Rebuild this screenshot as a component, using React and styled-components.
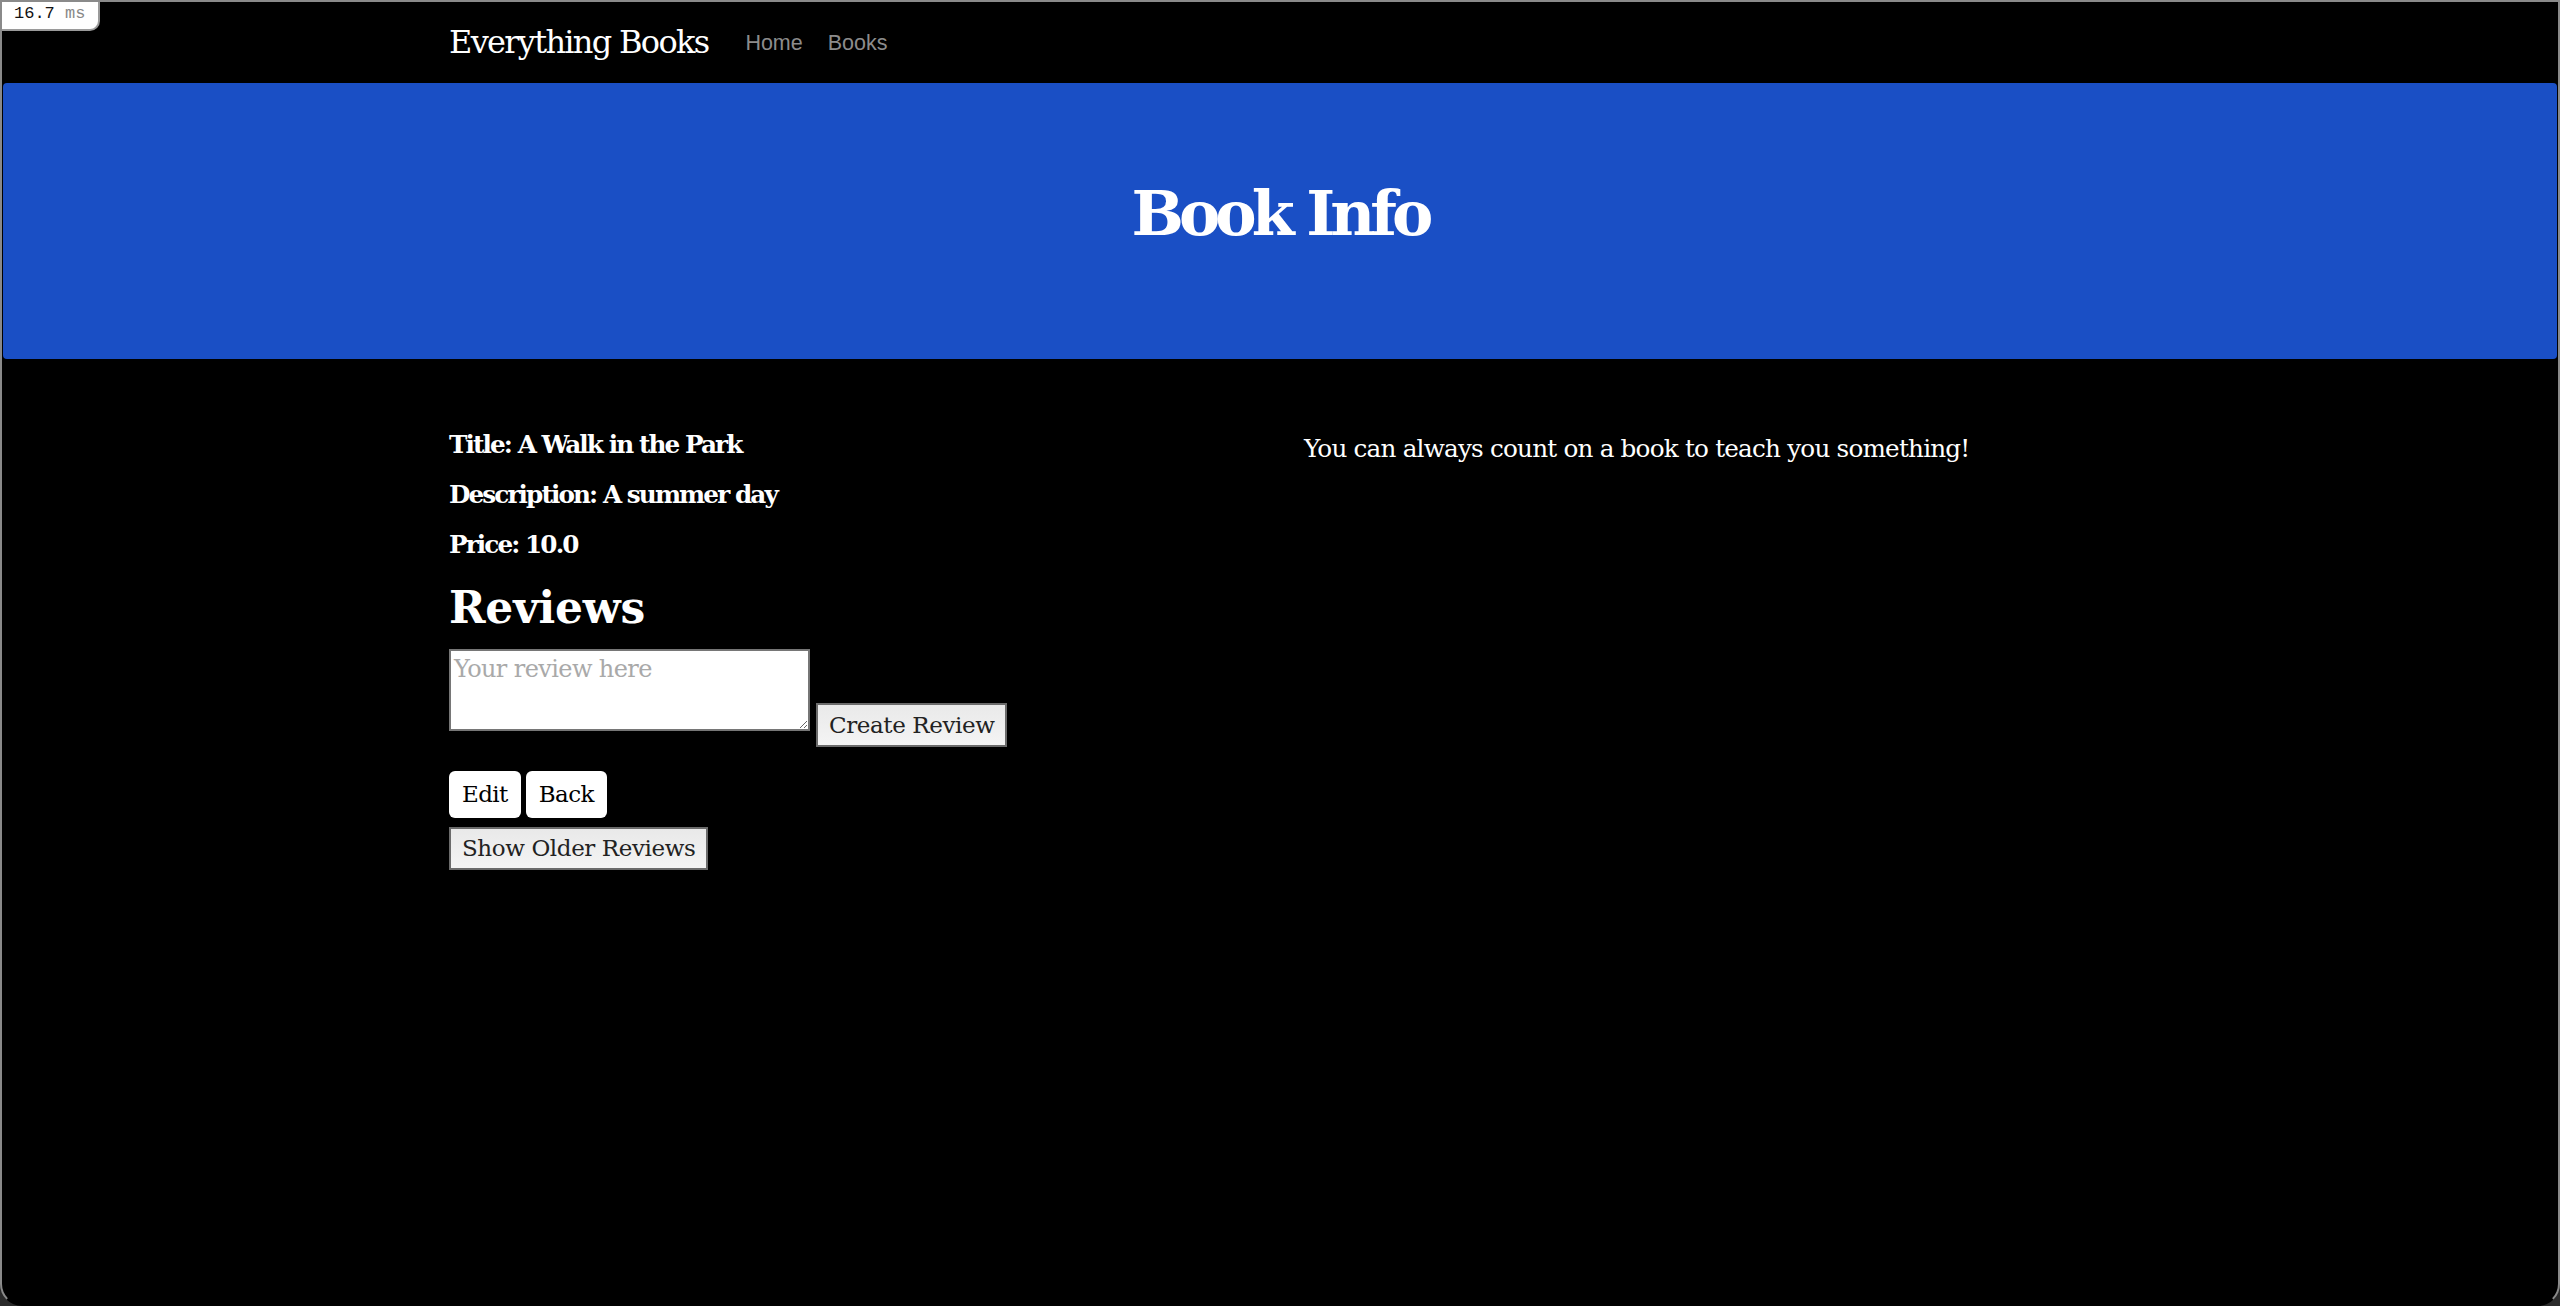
import React, { useState } from "react";
import styled, { createGlobalStyle } from "styled-components";

const GlobalStyle = createGlobalStyle`
  html, body {
    margin: 0;
    padding: 0;
    background: #2a2a2a;
  }
  body {
    font-family: "DejaVu Serif", serif;
  }
  * {
    box-sizing: border-box;
  }
`;

const Frame = styled.div`
  position: relative;
  height: 1306px;
  background: #000;
  border: 2px solid #8a8a8a;
  border-bottom-color: #000;
  border-radius: 0 0 22px 22px;
  overflow: hidden;
  color: #fff;
`;

const Timing = styled.div`
  position: absolute;
  top: -2px;
  left: -2px;
  width: 100px;
  height: 31px;
  padding: 4px 0 0 14px;
  background: #fff;
  border-right: 2px solid #9a9a9a;
  border-bottom: 2px solid #9a9a9a;
  border-radius: 0 0 10px 0;
  font-family: "Liberation Mono", monospace;
  font-size: 17px;
  color: #111;
  z-index: 2;

  span {
    color: #888;
  }
`;

const Navbar = styled.nav`
  height: 81px;
  display: flex;
  align-items: center;
  padding-left: 447px;
  padding-bottom: 2px;
`;

const Brand = styled.a`
  font-size: 32px;
  color: #fff;
  text-decoration: none;
  margin-right: 37px;
  letter-spacing: -1.7px;
`;

const NavLinks = styled.div`
  display: flex;
  gap: 25px;
  padding-top: 4px;
`;

const NavLink = styled.a`
  font-family: "Liberation Sans", Arial, sans-serif;
  font-size: 21.5px;
  color: #8c8c8c;
  text-decoration: none;
`;

const Hero = styled.header`
  height: 276px;
  margin: 0 1px;
  background: #1a4fc5;
  border-radius: 4px;
  padding-top: 94px;
  text-align: center;
`;

const HeroTitle = styled.h1`
  margin: 0;
  font-size: 62px;
  line-height: 1.2;
  font-weight: 700;
  letter-spacing: -5px;
`;

const Main = styled.main`
  display: grid;
  grid-template-columns: 1fr 1fr;
  column-gap: 50px;
  padding: 67px 449px 0 447px;
`;

const Column = styled.section`
  display: flex;
  flex-direction: column;
  align-items: flex-start;
`;

const Info = styled.p`
  margin: 0 0 13px;
  font-size: 24.7px;
  line-height: 37px;
  font-weight: ${(p) => (p.$bold ? 700 : 400)};
  letter-spacing: ${(p) => (p.$bold ? -1.9 : -0.8)}px;
  margin-top: ${(p) => p.$offset || 0}px;
`;

const SectionTitle = styled.h3`
  margin: 6px 0 14px;
  font-size: 44px;
  line-height: 52.8px;
  font-weight: 700;
  letter-spacing: -0.2px;
`;

const ReviewForm = styled.form`
  display: flex;
  align-items: flex-start;
  gap: 6px;
`;

const ReviewInput = styled.textarea`
  width: 361px;
  height: 82px;
  padding: 4px 3px;
  border: 2px solid #767676;
  font-family: "DejaVu Serif", serif;
  font-size: 24px;
  letter-spacing: -0.6px;
  resize: both;

  &::placeholder {
    color: #a9a9a9;
  }
`;

const PlainButton = styled.button`
  height: ${(p) => p.$h || 44}px;
  margin-top: ${(p) => p.$top || 0}px;
  padding: 0 11px;
  border: 2px solid #6b6b6b;
  background: linear-gradient(#e9e9e9, #f4f4f4);
  color: #222;
  font-family: "DejaVu Serif", serif;
  font-size: 23px;
  letter-spacing: -0.4px;
`;

const Actions = styled.div`
  display: flex;
  gap: 5px;
  margin-top: 24px;
`;

const LightButton = styled.button`
  height: 47px;
  padding: 0 13px;
  border: none;
  border-radius: 6px;
  background: #fff;
  color: #000;
  font-family: "DejaVu Serif", serif;
  font-size: 23px;
  letter-spacing: -0.6px;
`;

export default function App() {
  const [review, setReview] = useState("");

  return (
    <>
      <GlobalStyle />
      <Frame>
        <Timing>
          16.7 <span>ms</span>
        </Timing>
        <Navbar>
          <Brand href="#">Everything Books</Brand>
          <NavLinks>
            <NavLink href="#">Home</NavLink>
            <NavLink href="#">Books</NavLink>
          </NavLinks>
        </Navbar>
        <Hero>
          <HeroTitle>Book Info</HeroTitle>
        </Hero>
        <Main>
          <Column>
            <Info $bold>Title: A Walk in the Park</Info>
            <Info $bold>Description: A summer day</Info>
            <Info $bold>Price: 10.0</Info>
            <SectionTitle>Reviews</SectionTitle>
            <ReviewForm onSubmit={(e) => e.preventDefault()}>
              <ReviewInput
                placeholder="Your review here"
                value={review}
                onChange={(e) => setReview(e.target.value)}
              />
              <PlainButton type="submit" $top={54}>
                Create Review
              </PlainButton>
            </ReviewForm>
            <Actions>
              <LightButton>Edit</LightButton>
              <LightButton>Back</LightButton>
            </Actions>
            <PlainButton $h={43} $top={9}>
              Show Older Reviews
            </PlainButton>
          </Column>
          <Column>
            <Info $offset={4}>You can always count on a book to teach you something!</Info>
          </Column>
        </Main>
      </Frame>
    </>
  );
}
